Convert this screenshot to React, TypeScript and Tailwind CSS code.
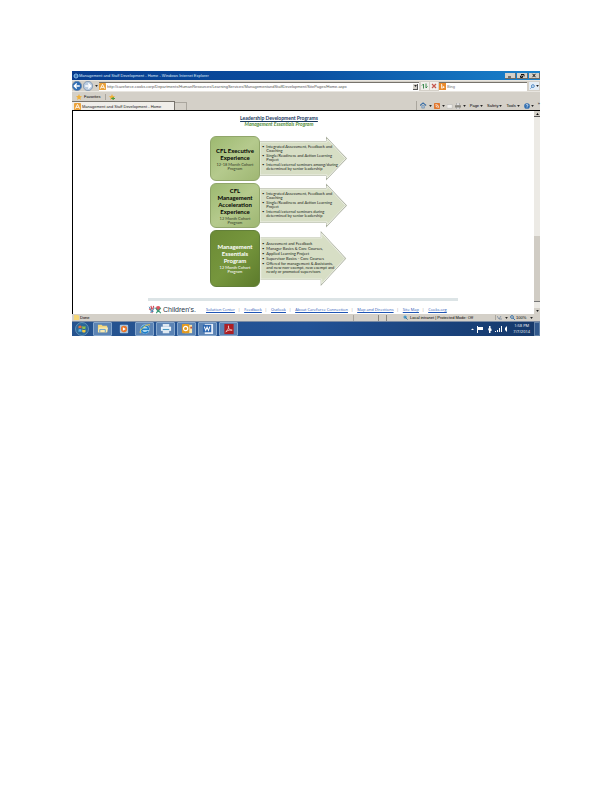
import React from "react";

type Program = {
  title: string[];
  cohort: string[];
  bullets: string[][];
  dark?: boolean;
};

const programs: Program[] = [
  {
    title: ["CFL Executive", "Experience"],
    cohort: ["12-18 Month Cohort", "Program"],
    bullets: [
      ["Integrated Assessment, Feedback and", "Coaching"],
      ["Single/Readiness and Action Learning", "Project"],
      ["Internal/external seminars among/during", "determined by senior leadership"],
    ],
  },
  {
    title: ["CFL", "Management", "Acceleration", "Experience"],
    cohort: ["12 Month Cohort", "Program"],
    bullets: [
      ["Integrated Assessment, Feedback and", "Coaching"],
      ["Single/Readiness and Action Learning", "Project"],
      ["Internal/external seminars during", "determined by senior leadership"],
    ],
  },
  {
    title: ["Management", "Essentials", "Program"],
    cohort: ["12 Month Cohort", "Program"],
    bullets: [
      ["Assessment and Feedback"],
      ["Manager Basics & Core Courses,"],
      ["Applied Learning Project"],
      ["Supervisor Basics - Core Courses"],
      ["Offered for management & Assistants,", "and new non-exempt, new exempt and", "newly or promoted supervisors"],
    ],
    dark: true,
  },
];

const footerLinks = ["Solution Center", "Feedback", "Outlook", "About Careforce Connection", "Map and Directions", "Site Map", "Cooks.org"];

function PageIcon() {
  return (
    <svg viewBox="0 0 8 8" className="h-[7px] w-[7px] shrink-0" aria-hidden="true">
      <rect width="8" height="8" rx="1" fill="#eba23c" />
      <path d="M1.5 6.5L4 1.5L6.5 6.5M2.5 5H5.5" stroke="#fff" strokeWidth="1" fill="none" />
    </svg>
  );
}

function Star({ plus }: { plus?: boolean }) {
  return (
    <svg viewBox="0 0 8 8" className="h-[6px] w-[6px] shrink-0" aria-hidden="true">
      <path d="M4 0L5.2 2.7L8 3L5.9 5L6.5 8L4 6.4L1.5 8L2.1 5L0 3L2.8 2.7Z" fill="#f0b03a" />
      {plus && <path d="M3 6H8M5.5 4V8" stroke="#4c9a3e" strokeWidth="1.5" />}
    </svg>
  );
}

function NavArrow({ forward }: { forward?: boolean }) {
  return (
    <button type="button" aria-label={forward ? "Forward" : "Back"} className="h-[10px] w-[10px] shrink-0">
      <svg viewBox="0 0 9 9" className="h-full w-full">
        <circle cx="4.5" cy="4.5" r="4.2" fill={forward ? "#b9cbe0" : "#2d6cb5"} stroke="#6e87a6" strokeWidth=".6" />
        <path
          d={forward ? "M2 4.5H7M4.7 2.3L7 4.5L4.7 6.7" : "M7 4.5H2M4.3 2.3L2 4.5L4.3 6.7"}
          stroke="#fff"
          strokeWidth="1.2"
          fill="none"
        />
      </svg>
    </button>
  );
}

function Caret() {
  return (
    <svg viewBox="0 0 4 3" className="h-[2px] w-[3px] shrink-0" aria-hidden="true">
      <path d="M0 0H4L2 3Z" fill="#222" />
    </svg>
  );
}

function TitleBar() {
  return (
    <header className="flex h-[9px] items-center bg-linear-to-r from-[#083c8e] via-[#0b4fa0] to-[#1a82cc] pl-px">
      <svg viewBox="0 0 6 6" className="h-[6px] w-[6px]" aria-hidden="true">
        <circle cx="3" cy="3" r="2" stroke="#8cc5f0" fill="none" />
        <path d="M1 3H5" stroke="#8cc5f0" strokeWidth=".8" />
      </svg>
      <h1 className="text-[4px] leading-[8px] text-[#dce8f8]">Management and Staff Development - Home - Windows Internet Explorer</h1>
      <div className="ml-auto flex gap-px">
        {["Minimize", "Restore", "Close"].map((name) => (
          <button key={name} type="button" aria-label={name} className="h-[6px] w-[11px] border-r border-b border-[#6c6a66] bg-[#d4d0c8]">
            <svg viewBox="0 0 10 5" className="h-full w-full" stroke="#111" fill="none">
              {name === "Minimize" && <path d="M3 4H6" />}
              {name === "Restore" && <path d="M4 1.5H7V3.5M3.5 3H5.5V4.5H3.5Z" />}
              {name === "Close" && <path d="M3.5 .8L6.5 4.2M6.5 .8L3.5 4.2" />}
            </svg>
          </button>
        ))}
      </div>
    </header>
  );
}

function AddressBar() {
  return (
    <div className="flex h-[11px] items-center gap-px border-t border-[#e8e5df]">
      <NavArrow />
      <NavArrow forward />
      <span className="flex w-[4px] justify-center">
        <Caret />
      </span>
      <div className="flex h-[9px] min-w-0 flex-1 items-center gap-px border-t border-[#77736c] bg-white">
        <PageIcon />
        <input
          aria-label="Address"
          readOnly
          className="min-w-0 flex-1 text-[4px] leading-[7px] text-[#555] outline-none"
          value="http://careforce.cooks.corp/Departments/HumanResources/LearningServices/ManagementandStaffDevelopment/SitePages/Home.aspx"
        />
        <button type="button" aria-label="Address history" className="mr-px flex h-[6px] w-[5px] items-center justify-center border-r border-b border-[#555] bg-[#d4d0c8]">
          <Caret />
        </button>
      </div>
      <button type="button" aria-label="Refresh" className="ml-px h-[8px] w-[8px] bg-[#f0eeea]">
        <svg viewBox="0 0 8 8" className="h-full w-full" fill="none" stroke="#3d8a4e">
          <path d="M2.5 6.5V2L1 3.5M5 1.5V6L6.5 4.5" />
        </svg>
      </button>
      <button type="button" aria-label="Stop" className="h-[8px] w-[8px] bg-[#f0eeea]">
        <svg viewBox="0 0 8 8" className="h-full w-full" fill="none" stroke="#c4574e" strokeWidth="1.2">
          <path d="M2 2L6 6M6 2L2 6" />
        </svg>
      </button>
      <div className="flex h-[9px] w-[88px] items-center gap-px border-t border-[#77736c] bg-white">
        <svg viewBox="0 0 8 8" className="h-[7px] w-[7px]" aria-hidden="true">
          <rect width="8" height="8" fill="#e98a2b" />
          <path d="M3 1V6L6 4.8L4 3.5" stroke="#fff" fill="none" />
        </svg>
        <input aria-label="Search" placeholder="Bing" className="min-w-0 flex-1 text-[4px] leading-[7px] outline-none placeholder:text-[#777]" />
      </div>
      <button type="button" aria-label="Search the web" className="mx-px flex h-[8px] w-[10px] items-center justify-center gap-px bg-[#e4edf6]">
        <svg viewBox="0 0 6 6" className="h-[5px] w-[5px]" fill="none" stroke="#3779bd">
          <circle cx="3.5" cy="2.5" r="1.7" />
          <path d="M2.2 3.8L.5 5.5" />
        </svg>
        <Caret />
      </button>
    </div>
  );
}

function Tabs() {
  return (
    <div className="flex h-[10px] items-end border-b border-black">
      <div className="flex h-[9px] w-[103px] items-center gap-px border-t border-r border-[#77736c] bg-[#f0eeea] pl-[2px]">
        <PageIcon />
        <span className="text-[4px] leading-[5px] text-[#222]">Management and Staff Development - Home</span>
      </div>
      <button type="button" aria-label="New tab" className="h-[8px] w-[12px] border-t border-r border-[#aaa69e]" />
      <nav aria-label="Commands" className="ml-auto flex h-[9px] items-center gap-[4px] border-l border-[#aaa69e] pl-[3px] text-[4px] leading-[5px] text-black">
        <div className="flex items-center gap-[2px]">
          <button type="button" aria-label="Home" className="flex items-center gap-[2px]">
            <svg viewBox="0 0 8 8" className="h-[7px] w-[7px]">
              <path d="M0 4L3.5 1L7 4" stroke="#3b6ea5" fill="none" strokeWidth="1.3" />
              <path d="M2 4H5V7H2Z" fill="#a6bfd8" stroke="#5c7fa2" strokeWidth=".6" />
            </svg>
            <Caret />
          </button>
          <button type="button" aria-label="Feeds" className="flex items-center gap-[2px]">
            <svg viewBox="0 0 8 8" className="h-[6px] w-[6px]">
              <rect width="8" height="8" rx="1" fill="#e0762c" />
              <path d="M2 4A2.3 2.3 0 0 1 4.3 6.3M2 2A4.3 4.3 0 0 1 6.3 6.3" stroke="#fff" fill="none" />
            </svg>
            <Caret />
          </button>
          <button type="button" aria-label="Mail">
            <svg viewBox="0 0 8 8" className="h-[6px] w-[6px]">
              <path d="M0 2H7V7H0Z" fill="#f2f0ec" stroke="#aaa" strokeWidth=".6" />
            </svg>
          </button>
          <button type="button" aria-label="Print" className="flex items-center gap-[2px]">
            <svg viewBox="0 0 8 8" className="h-[6px] w-[6px]">
              <path d="M2 0H6V3H2ZM2 5H6V8H2Z" fill="#eee" stroke="#888" strokeWidth=".6" />
              <path d="M0 3H8V6H0Z" fill="#88867f" />
            </svg>
            <Caret />
          </button>
        </div>
        {["Page", "Safety", "Tools"].map((item) => (
          <button key={item} type="button" className="flex items-center gap-px">
            {item}
            <Caret />
          </button>
        ))}
        <button type="button" aria-label="Help" className="flex items-center gap-px">
          <svg viewBox="0 0 8 8" className="h-[6px] w-[6px]">
            <circle cx="4" cy="4" r="3.8" fill="#2f6db0" />
            <path d="M2.8 3A1.2 1.2 0 1 1 4 4.3V5M4 6V6.8" stroke="#fff" fill="none" strokeWidth=".9" />
          </svg>
          <Caret />
        </button>
        <span className="self-start">»</span>
      </nav>
    </div>
  );
}

function ProgramRow({ program }: { program: Program }) {
  const { title, cohort, bullets, dark } = program;
  return (
    <section className={dark ? "flex h-[57px]" : "flex h-[45px]"}>
      <div
        className={
          dark
            ? "flex w-[50px] shrink-0 flex-col items-center justify-center gap-[2px] rounded-[6px] border border-[#63803a] bg-linear-to-br from-[#6c8b35] via-[#76963d] to-[#5d7b2c] text-white"
            : "flex w-[50px] shrink-0 flex-col items-center justify-center gap-[2px] rounded-[6px] border border-[#91a66b] bg-linear-to-br from-[#9db970] via-[#b5ca8d] to-[#9fb773] text-black"
        }
      >
        <h3 className="text-center text-[6px] leading-[7px] font-bold">
          {title.map((line) => (
            <span key={line} className="block">{line}</span>
          ))}
        </h3>
        <p className={dark ? "text-center text-[4px] leading-[4px] text-white" : "text-center text-[4px] leading-[4px] text-[#34402a]"}>
          {cohort.map((line) => (
            <span key={line} className="block">{line}</span>
          ))}
        </p>
      </div>
      <div className="relative flex w-[88px] items-center">
        <svg viewBox={dark ? "0 0 88 58" : "0 0 88 45"} className="absolute inset-0 h-full w-full" aria-hidden="true">
          <path
            d={dark ? "M0 7H61V1L87 29L61 57V51H0Z" : "M0 5H66V0.5L87 22.5L66 44.5V40H0Z"}
            fill="#a9ae9d"
          />
          <path
            d={dark ? "M0 8H62V3.5L85.5 29L62 54.5V50H0Z" : "M0 6H67V3L85.5 22.5L67 42V39H0Z"}
            fill="#d7dec5"
            stroke="#eef1e6"
            strokeWidth="1"
          />
        </svg>
        <ul className="relative pl-[2px] text-[4px] leading-[4px] text-[#22271c]">
          {bullets.map((lines) => (
            <li key={lines[0]} className="flex gap-[2px] pb-px">
              <span>•</span>
              <span>
                {lines.map((line) => (
                  <span key={line} className="block">{line}</span>
                ))}
              </span>
            </li>
          ))}
        </ul>
      </div>
    </section>
  );
}

function Logo() {
  return (
    <div className="flex w-[50px] items-start gap-px">
      <svg viewBox="0 0 15 10" className="h-[9px] w-[14px] shrink-0" fill="none" aria-hidden="true">
        <path d="M1 4L3 6M3 1L4 5M6 1L5 5M5 6L4 9" stroke="#cf4b57" strokeWidth="1.3" />
        <path d="M1 2L4 7L7 3M2 8L6 7" stroke="#3f86b5" strokeWidth="1" />
        <circle cx="11" cy="3.5" r="2.5" fill="#db5560" />
        <path d="M8 3L11 7L14 3M9 9L11 6L14 9" stroke="#3a9a78" strokeWidth="1.2" />
      </svg>
      <span className="pt-px text-[7px] leading-[8px] text-[#27364a]">Children's.</span>
    </div>
  );
}

function ScrollBar() {
  return (
    <div className="flex w-[6px] shrink-0 flex-col bg-[#eceae5]" aria-hidden="true">
      <div className="flex h-[6px] items-center justify-center border-b border-[#555] bg-[#d4d0c8]">
        <svg viewBox="0 0 4 3" className="h-[2px] w-[3px]">
          <path d="M0 3H4L2 0Z" />
        </svg>
      </div>
      <div className="flex-[120]" />
      <div className="flex-[65] border-b border-[#777] bg-[#d0ccc4]" />
      <div className="flex-[6]" />
      <div className="flex h-[6px] items-center justify-center bg-[#d4d0c8]">
        <Caret />
      </div>
    </div>
  );
}

function StatusBar() {
  return (
    <div className="flex h-[7px] items-center bg-[#d4d0c8] text-[4px] leading-[6px] text-black">
      <span className="flex items-center gap-px pl-[2px]">
        <svg viewBox="0 0 5 5" className="h-[5px] w-[5px]" aria-hidden="true">
          <path d="M0 0H4L5 1V5H0Z" fill="#f5d77a" />
        </svg>
        Done
      </span>
      <div className="ml-auto flex h-[6px] items-center">
        <span className="h-full w-[25px] border-l border-[#aaa69e]" />
        <span className="h-full w-[8px] border-l border-[#8c8880]" />
        <span className="h-full w-[17px] border-l border-[#8c8880]" />
        <span className="flex w-[92px] items-center gap-[2px]">
          <svg viewBox="0 0 6 6" className="h-[5px] w-[5px]" aria-hidden="true">
            <circle cx="2.5" cy="2.5" r="2" fill="#4b9bc9" />
            <path d="M3 3L5.5 5.5" stroke="#2d6b95" />
          </svg>
          Local intranet | Protected Mode: Off
        </span>
        <span className="flex w-[15px] items-center gap-[3px] border-l border-[#aaa69e] pl-px">
          <svg viewBox="0 0 5 5" className="h-[5px] w-[5px]" fill="none" stroke="#6a7f98" aria-hidden="true">
            <path d="M0 1L2 4L4 1M2 4H5" strokeWidth=".7" />
          </svg>
          <Caret />
        </span>
        <span className="flex items-center gap-px">
          <svg viewBox="0 0 5 5" className="h-[5px] w-[5px]" fill="none" stroke="#4177ac" aria-hidden="true">
            <circle cx="2" cy="2" r="1.4" />
            <path d="M3 3L5 5" />
          </svg>
          <span className="w-[14px]">100%</span>
        </span>
        <span className="w-[10px]">
          <Caret />
        </span>
      </div>
    </div>
  );
}

const apps: { name: string; active?: boolean; art: React.ReactNode }[] = [
  {
    name: "Explorer",
    active: true,
    art: (
      <>
        <path d="M1 2H5L6 3H11V10H1Z" fill="#f3d67c" />
        <path d="M2 5H12L11 10H1Z" fill="#fae9ae" />
        <path d="M3 10V7H9V10" stroke="#5f9dcc" fill="none" />
      </>
    ),
  },
  {
    name: "Media Player",
    art: (
      <>
        <rect x="2" y="2" width="9" height="9" rx="1" fill="#a9c5dd" />
        <circle cx="6.5" cy="6.5" r="3.4" fill="#e9762a" />
        <path d="M5.3 4.5V8.5L8.5 6.5Z" fill="#fff" />
      </>
    ),
  },
  {
    name: "Internet Explorer",
    active: true,
    art: (
      <>
        <circle cx="6.5" cy="6.7" r="5" fill="#a9d6f2" />
        <path d="M9.8 8.8A3.8 3.8 0 1 1 10.3 6.8H3.5" stroke="#1f7fc8" strokeWidth="1.7" fill="none" />
        <path d="M1.5 11C-.5 8 8 .5 12 2" stroke="#f0cf4b" strokeWidth="1" fill="none" />
      </>
    ),
  },
  {
    name: "Printer",
    active: true,
    art: (
      <>
        <path d="M3 1H10V4H3ZM3 8H10V11H3Z" fill="#dfe9f1" />
        <path d="M1 4H12V8.5H1Z" fill="#e9f3fa" />
        <path d="M3 7H10" stroke="#378dbb" />
      </>
    ),
  },
  {
    name: "Outlook",
    active: true,
    art: (
      <>
        <rect x="4" y="2" width="8" height="9" fill="#f9e7ad" />
        <rect x="1" y="1" width="8" height="10" rx="1" fill="#e39b22" />
        <circle cx="5" cy="6" r="2.3" stroke="#fff" strokeWidth="1.3" fill="none" />
        <path d="M10 4H12V6H10Z" fill="#c4573d" />
      </>
    ),
  },
  {
    name: "Word",
    active: true,
    art: (
      <>
        <rect x="3" y="1" width="9" height="11" fill="#e7eef9" />
        <rect x="1" y="2" width="9" height="8" fill="#2e68b2" />
        <path d="M2.5 4L4 8L5.5 4.5L7 8L8.5 4" stroke="#fff" strokeWidth="1.1" fill="none" />
      </>
    ),
  },
  {
    name: "Acrobat",
    active: true,
    art: (
      <>
        <rect x="1.5" y="1" width="10" height="11" fill="#ad1e23" />
        <path d="M3 9.5C5 8.5 6.5 5 6 3C5.5 5 7 8.5 10 7.7C8 7 5 8 3 9.5" stroke="#f5dada" strokeWidth=".8" fill="none" />
      </>
    ),
  },
];

function TaskBar() {
  return (
    <footer className="flex h-[15px] items-center border-t border-[#7b8ba3] bg-linear-to-r from-[#26538f] via-[#225296] to-[#15386a]">
      <button type="button" aria-label="Start" className="ml-[3px] h-[14px] w-[14px]">
        <svg viewBox="0 0 14 14" className="h-full w-full">
          <circle cx="7" cy="7" r="6.5" fill="#2b6799" stroke="#7ba9c9" strokeWidth=".7" />
          <path d="M3.5 4Q5 3 6.5 4V6.6Q5 5.6 3.5 6.6Z" fill="#e56a3c" />
          <path d="M7.2 4Q9 5 10.5 4V6.6Q9 7.6 7.2 6.6Z" fill="#8dc04b" />
          <path d="M3.5 7.4Q5 6.4 6.5 7.4V10Q5 9 3.5 10Z" fill="#5cb2e8" />
          <path d="M7.2 7.4Q9 8.4 10.5 7.4V10Q9 11 7.2 10Z" fill="#f3c83f" />
        </svg>
      </button>
      <div className="ml-[4px] flex gap-[2px]">
        {apps.map(({ name, active, art }) => (
          <button
            key={name}
            type="button"
            aria-label={name}
            className={
              active
                ? "flex h-[14px] w-[19px] items-center justify-center rounded-[1px] border border-[#86a7cc] bg-[#5b83b4]"
                : "flex h-[14px] w-[19px] items-center justify-center"
            }
          >
            <svg viewBox="0 0 13 13" className="h-[12px] w-[12px]">{art}</svg>
          </button>
        ))}
      </div>
      <div className="ml-auto flex items-center gap-[4px]">
        <svg viewBox="0 0 38 10" className="h-[10px] w-[38px]" fill="#fff" aria-hidden="true">
          <path d="M0 6L1.5 4.5L3 6Z" />
          <path d="M6 2H7V9H6ZM7 3H12V6H7Z" />
          <path d="M18 2H19.5V4L20.5 5V7H19.5V9H18V7L17 5L18 4Z" />
          <path d="M24 7H25V8H24ZM26 6H27V8H26ZM28 4H29V8H28ZM30 2H31V8H30Z" />
          <path d="M34 4L36 2V8L34 6Z" />
        </svg>
        <time className="text-center font-['Open_Sans',sans-serif] text-[4px] leading-[6px] text-white">
          <span className="block">1:58 PM</span>
          <span className="block">7/7/2014</span>
        </time>
        <button type="button" aria-label="Show desktop" className="h-[14px] w-[6px] border border-[#6483a8] bg-[#31588c]" />
      </div>
    </footer>
  );
}

export default function App() {
  return (
    <main className="min-h-screen bg-white px-[72px] pt-[71px] font-['Liberation_Sans',Arial,sans-serif] whitespace-nowrap">
      <div className="bg-[#d4d0c8]">
        <TitleBar />
        <AddressBar />
        <div className="flex h-[10px] items-center gap-[3px] border-t border-[#e8e5df] pl-[4px] text-[4px] leading-[5px] text-black">
          <button type="button" className="flex items-center gap-[2px] border-r border-[#aaa69e] pr-[5px]">
            <Star />
            Favorites
          </button>
          <button type="button" aria-label="Add to favorites">
            <Star plus />
          </button>
        </div>
        <Tabs />
        <div className="flex border-l border-black bg-white">
          <div className="flex min-w-0 flex-1 flex-col">
            <div className="ml-[137px] flex w-[138px] flex-col gap-[2px] pt-[4px] font-[Lato,sans-serif]">
              <div className="mb-[7px] text-center leading-[6px]">
                <h2 className="text-[5px] font-bold text-[#17375e] underline">Leadership Development Programs</h2>
                <p className="text-[5px] font-bold text-[#4f8a35] italic">Management Essentials Program</p>
              </div>
              {programs.map((program) => (
                <ProgramRow key={program.title.join(" ")} program={program} />
              ))}
            </div>
            <div className="mt-[11px] ml-[75px] w-[310px]">
              <div className="h-[3px] bg-[#dce4e6]" />
              <div className="flex h-[13px] items-start pt-[4px]">
                <Logo />
                <nav aria-label="Footer" className="flex items-center pl-[8px] font-['Open_Sans',sans-serif] text-[4px] leading-[9px]">
                  {footerLinks.map((link, i) => (
                    <React.Fragment key={link}>
                      {i > 0 && <span className="pr-[4px] pl-[3px] text-[#888]">|</span>}
                      <a href="#top" className="text-[#1f55b5] underline">{link}</a>
                    </React.Fragment>
                  ))}
                </nav>
              </div>
            </div>
          </div>
          <ScrollBar />
        </div>
        <StatusBar />
        <TaskBar />
      </div>
    </main>
  );
}
